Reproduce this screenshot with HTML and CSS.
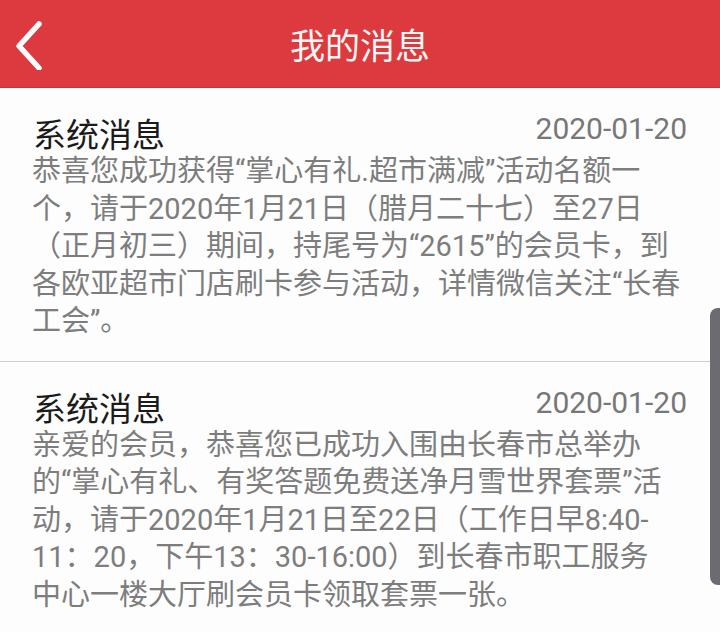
FILE: index.html
```html
<!DOCTYPE html>
<html lang="zh-CN">
<head>
<meta charset="utf-8">
<title>我的消息</title>
<link rel="stylesheet" href="styles.css">
</head>
<body>
<div class="screen">
  <header class="topbar">
    <div class="back">
      <svg width="32" height="50" viewBox="0 0 32 50"><path d="M26 4 L6 26 L26 48" fill="none" stroke="#ffffff" stroke-width="5.5" stroke-linecap="round" stroke-linejoin="round"/></svg>
    </div>
    <h1 class="title">我的消息</h1>
    <div></div>
  </header>
  <main class="list">
    <section class="msg">
      <div class="msg-head"><span class="msg-title">系统消息</span><span class="msg-date">2020-01-20</span></div>
      <p class="msg-body">恭喜您成功获得“掌心有礼.超市满减”活动名额一<br>个，请于2020年1月21日（腊月二十七）至27日<br>（正月初三）期间，持尾号为“2615”的会员卡，到<br>各欧亚超市门店刷卡参与活动，详情微信关注“长春<br>工会”。</p>
    </section>
    <section class="msg">
      <div class="msg-head"><span class="msg-title">系统消息</span><span class="msg-date">2020-01-20</span></div>
      <p class="msg-body">亲爱的会员，恭喜您已成功入围由长春市总举办<br>的“掌心有礼、有奖答题免费送净月雪世界套票”活<br>动，请于2020年1月21日至22日（工作日早8:40-<br>11：20，下午13：30-16:00）到长春市职工服务<br>中心一楼大厅刷会员卡领取套票一张。</p>
    </section>
  </main>
  <div class="edge"></div>
</div>
</body>
</html>
```
FILE: styles.css
```css
html, body {
  margin: 0;
  padding: 0;
  background: #fdfdfd;
}
.screen {
  position: relative;
  width: 720px;
  height: 632px;
  overflow: hidden;
  font-family: Roboto, "Noto Sans CJK SC", sans-serif;
  background: #fdfdfd;
}
.topbar {
  height: 88px;
  background: #dc3a3f;
  display: grid;
  grid-template-columns: 80px 1fr 80px;
  align-items: center;
  border-bottom: 1px solid #c93236;
  box-sizing: border-box;
}
.back {
  display: flex;
  align-items: center;
  padding-left: 13px;
  padding-top: 2px;
}
.title {
  margin: 0;
  text-align: center;
  color: #fff7f5;
  font-weight: 400;
  font-size: 35px;
  line-height: 40px;
  font-family: "Noto Sans CJK SC", sans-serif;
}
.msg {
  padding: 26px 33px 20px 32px;
  border-bottom: 1px solid #cfcfcf;
}
.msg-head {
  display: flex;
  justify-content: space-between;
  align-items: center;
  height: 38px;
}
.msg-title {
  font-size: 33px;
  line-height: 38px;
  color: #1b1b1b;
  font-family: "Noto Sans CJK SC", sans-serif;
  padding-left: 1px;
}
.msg-date {
  font-size: 30px;
  line-height: 38px;
  color: #777777;
  margin-top: -8px;
}
.msg-body {
  margin: 1px 0 0 0;
  font-size: 29px;
  line-height: 37.5px;
  color: #7d7d7d;
  white-space: nowrap;
}
.edge {
  position: absolute;
  right: 0;
  top: 308px;
  width: 10px;
  height: 277px;
  background: #6c6b71;
  border-radius: 8px 0 0 8px;
}
```
